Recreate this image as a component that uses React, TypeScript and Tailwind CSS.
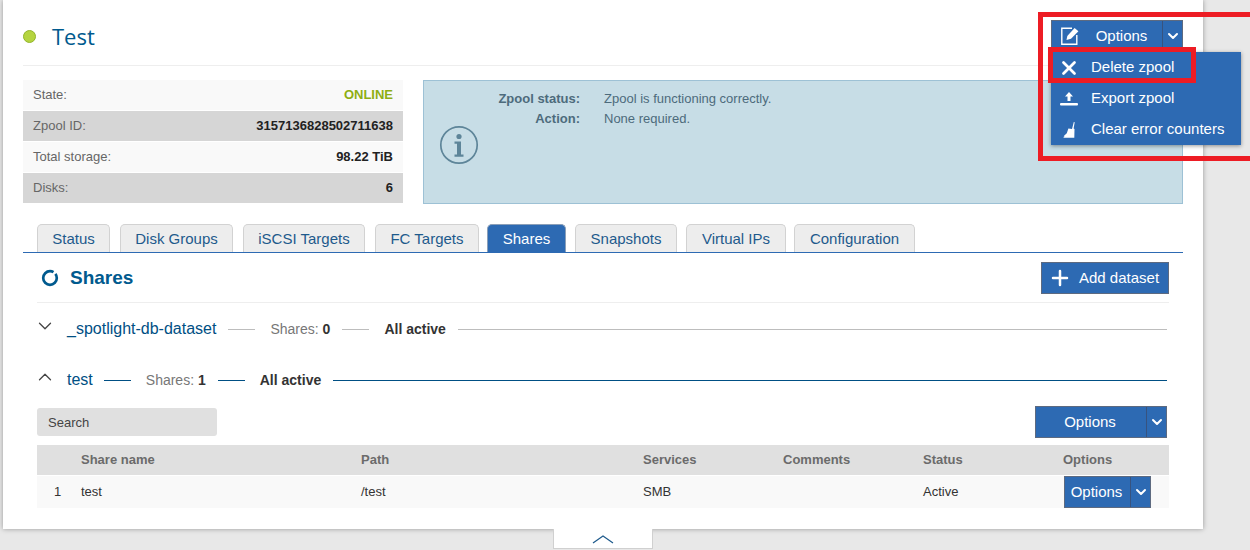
import { ChevronDown, ChevronUp, Plus, X } from 'lucide-react';

const tabs = [
  { label: 'Status', w: 'w-[73px] ml-[14px]' },
  { label: 'Disk Groups', w: 'w-[113px] ml-[10px]' },
  { label: 'iSCSI Targets', w: 'w-[122px] ml-[10px]' },
  { label: 'FC Targets', w: 'w-[104px] ml-[10px]' },
  { label: 'Shares', w: 'w-[79px] ml-[8px]', active: true },
  { label: 'Snapshots', w: 'w-[102px] ml-[9px]' },
  { label: 'Virtual IPs', w: 'w-[100px] ml-[9px]' },
  { label: 'Configuration', w: 'w-[121px] ml-[8px]' },
];

const stats = [
  { label: 'State:', value: 'ONLINE', dark: false, green: true },
  { label: 'Zpool ID:', value: '3157136828502711638', dark: true },
  { label: 'Total storage:', value: '98.22 TiB', dark: false },
  { label: 'Disks:', value: '6', dark: true },
];

function EditIcon() {
  return (
    <svg width="18" height="18" viewBox="0 0 18 18" fill="none">
      <path d="M11 1.2H.8v16h15V8" stroke="white" strokeWidth="1.4" />
      <path d="M5.5 13l.8-4L13.6 1l3.8 3.2-7.4 7.6z" fill="white" />
    </svg>
  );
}

function ExportIcon() {
  return (
    <svg width="18" height="18" viewBox="0 0 18 18" fill="white">
      <path d="M9 2l4 4.5h-2.5V11h-3V6.5H5z" />
      <rect x="0" y="13" width="18" height="2.6" rx="1" />
    </svg>
  );
}

function BroomIcon() {
  return (
    <svg width="12" height="16" viewBox="0 0 12 16" fill="white">
      <path d="M10.8 0l.9.3-1.1 6.2.9.4-.2 8.8H0l1.6-1-1-.4 3.2-3 1.6-4.8 3.6.4z" />
    </svg>
  );
}

function InfoIcon() {
  return (
    <svg width="40" height="40" viewBox="0 0 40 40" fill="none">
      <circle cx="20" cy="20" r="18.2" stroke="#5e8599" strokeWidth="1.7" />
      <circle cx="20" cy="11.5" r="2.6" fill="#5e8599" />
      <path d="M15.5 16.5h6.5v13h2.5v2.3h-9v-2.3h2.5V18.8h-2.5z" fill="#5e8599" />
    </svg>
  );
}

function OptionsButton({ className }: { className: string }) {
  return (
    <div className={`flex border border-[#5d6a80] bg-[#2d6ab3] text-white text-[15px] ${className}`}>
      <span className="flex-1 flex items-center justify-center pr-[2px]">Options</span>
      <span className="w-[20px] border-l border-[#37537f] flex items-center justify-center">
        <ChevronDown size={16} strokeWidth={3} />
      </span>
    </div>
  );
}

function DatasetRow({
  name,
  count,
  open,
}: {
  name: string;
  count: number;
  open?: boolean;
}) {
  const line = open ? 'bg-[#004f84]' : 'bg-[#bdbdbd]';
  const chevron = '-ml-[3px] -mt-[6px]';
  return (
    <div className="flex items-center h-[20px]">
      <span className="w-[30px] text-[#444]">
        {open ? <ChevronUp size={22} strokeWidth={1.4} className={chevron} /> : <ChevronDown size={22} strokeWidth={1.4} className={chevron} />}
      </span>
      <span className="text-[16px] text-[#004f84]">{name}</span>
      <span className={`w-[27px] h-px ${open ? 'ml-[11px]' : 'ml-[12px]'} ${line}`} />
      <span className="ml-[15px] text-[14px] text-[#777]">
        Shares: <b className="text-[#333]">{count}</b>
      </span>
      <span className={`w-[27px] h-px ml-[12px] ${line}`} />
      <span className="ml-[15px] text-[14px] font-bold text-[#333]">All active</span>
      <span className={`flex-1 h-px ml-[12px] mr-[2px] ${line}`} />
    </div>
  );
}

export default function App() {
  return (
    <div className="relative w-[1250px] h-[550px] overflow-hidden bg-[#e8e8e8] font-['Liberation_Sans',Arial,sans-serif]">
      <div className="ml-[3px] w-[1200px] h-[529px] bg-white px-[20px] shadow-[0_0_5px_rgba(0,0,0,0.35)]">
        {/* Header */}
        <div className="h-[66px] border-b border-[#eeeeee] flex items-center relative">
          <span className="w-[13px] h-[13px] rounded-full bg-[#b5d43f] border border-[#92b52b] mt-[7px]" />
          <h1 className="ml-[16px] text-[22px] text-[#005a8e] font-['Open_Sans',sans-serif] mt-[7px]">Test</h1>
          <div className="absolute left-[1028px] top-[20px] w-[132px] h-[32px] flex border border-[#5d6a80] bg-[#2d6ab3] text-white text-[15px]">
            <span className="w-[36px] flex items-center justify-center"><EditIcon /></span>
            <span className="flex-1 flex items-center justify-center pr-[7px]">Options</span>
            <span className="w-[20px] border-l border-[#37537f] flex items-center justify-center">
              <ChevronDown size={16} strokeWidth={3} />
            </span>
          </div>
        </div>

        {/* Summary */}
        <div className="mt-[14px] flex gap-[20px]">
          <div className="w-[380px] flex flex-col gap-px">
            {stats.map((s) => (
              <div
                key={s.label}
                className={`h-[30px] flex items-center justify-between px-[10px] text-[13px] ${s.dark ? 'bg-[#d6d6d6]' : 'bg-[#f9f9f9]'}`}
              >
                <span className="text-[#666]">{s.label}</span>
                <span className={s.green ? 'font-bold text-[#8eae12]' : 'font-bold text-[#222]'}>{s.value}</span>
              </div>
            ))}
          </div>
          <div className="w-[760px] h-[124px] bg-[#c7dde6] border border-[#9dc1d5] relative text-[13px] text-[#4d6b7c]">
            <div className="absolute left-[15px] top-[44px]"><InfoIcon /></div>
            <div className="grid grid-cols-[156px_1fr] gap-x-[24px] gap-y-[5px] pt-[10px] leading-[15px]">
              <b className="text-right">Zpool status:</b>
              <span>Zpool is functioning correctly.</span>
              <b className="text-right">Action:</b>
              <span>None required.</span>
            </div>
          </div>
        </div>

        {/* Tabs */}
        <div className="mt-[20px] h-[29px] border-b border-[#2d6ab3] flex">
          {tabs.map((t) => (
            <div
              key={t.label}
              className={`${t.w} h-[28px] pt-[1px] rounded-t-[5px] border border-b-0 flex items-center justify-center text-[15px] ${
                t.active ? 'bg-[#2d6ab3] border-[#8b9fb8] text-white' : 'bg-[#ededed] border-[#d2d2d2] text-[#1e5a8c]'
              }`}
            >
              {t.label}
            </div>
          ))}
        </div>

        {/* Shares */}
        <div className="mx-[14px]">
          <div className="h-[50px] border-b border-[#eeeeee] flex items-center justify-between">
            <div className="flex items-center">
              <svg width="18" height="18" viewBox="0 0 18 18" fill="none" className="ml-[4px]">
                <circle cx="9" cy="9" r="6.8" stroke="#005a8e" strokeWidth="2.7" strokeDasharray="35.5 2.5 4.7" />
              </svg>
              <h2 className="ml-[11px] text-[19px] leading-[24px] font-bold text-[#005a8e]">Shares</h2>
            </div>
            <div className="w-[128px] h-[32px] pt-[1px] border border-[#5d6a80] bg-[#2d6ab3] text-white text-[15px] flex items-center">
              <Plus size={24} strokeWidth={2.5} className="ml-[6px]" />
              <span className="ml-[7px]">Add dataset</span>
            </div>
          </div>

          <div className="mt-[16px]">
            <DatasetRow name="_spotlight-db-dataset" count={0} />
          </div>
          <div className="mt-[31px]">
            <DatasetRow name="test" count={1} open />
          </div>

          <div className="mt-[16px] flex items-center justify-between pr-[2px]">
            <div className="w-[180px] h-[28px] pt-[1px] bg-[#e0e0e0] rounded-[3px] flex items-center pl-[11px] text-[13px] text-[#444]">Search</div>
            <OptionsButton className="w-[132px] h-[32px]" />
          </div>

          {/* Table */}
          <div className="mt-[7px] h-[30px] bg-[#e0e0e0] grid grid-cols-[44px_280px_282px_140px_140px_140px_1fr] items-center text-[13px] font-bold text-[#6b6b6b]">
            <span />
            <span>Share name</span>
            <span>Path</span>
            <span>Services</span>
            <span>Comments</span>
            <span>Status</span>
            <span>Options</span>
          </div>
          <div className="mt-px h-[32px] bg-[#f9f9f9] grid grid-cols-[44px_280px_282px_140px_140px_141px_1fr] items-center text-[13px] text-[#333]">
            <span className="pl-[17px]">1</span>
            <span>test</span>
            <span>/test</span>
            <span>SMB</span>
            <span />
            <span>Active</span>
            <OptionsButton className="w-[87px] h-[32px]" />
          </div>
        </div>
      </div>

      {/* Collapse handle */}
      <div className="ml-[3px] w-[1200px] flex justify-center">
        <div className="w-[100px] h-[20px] bg-white border border-t-0 border-[#d0d0d0] flex items-center justify-center">
          <svg width="22" height="10" viewBox="0 0 22 10" fill="none">
            <path d="M1 9l10-7 10 7" stroke="#1e5a8c" strokeWidth="1.2" />
          </svg>
        </div>
      </div>

      {/* Dropdown menu */}
      <div className="absolute left-[1051px] top-[52px] w-[190px] h-[93px] bg-[#2d6ab3] text-white text-[15px] shadow-[0_1px_4px_rgba(0,0,0,0.4)] flex flex-col">
        <div className="h-[31px] flex items-center">
          <span className="w-[36px] mr-[4px] flex justify-center"><X size={22} strokeWidth={3} /></span>
          <span>Delete zpool</span>
        </div>
        <div className="h-[31px] flex items-center">
          <span className="w-[36px] mr-[4px] flex justify-center"><ExportIcon /></span>
          <span>Export zpool</span>
        </div>
        <div className="h-[31px] flex items-center">
          <span className="w-[36px] mr-[4px] flex justify-center"><BroomIcon /></span>
          <span>Clear error counters</span>
        </div>
      </div>

      {/* Annotation boxes */}
      <div className="absolute left-[1038px] top-[12px] w-[230px] h-[149px] border-[5px] border-[#ed1c24]" />
      <div className="absolute left-[1048px] top-[47px] w-[148px] h-[36px] border-[5px] border-[#ed1c24]" />
    </div>
  );
}
